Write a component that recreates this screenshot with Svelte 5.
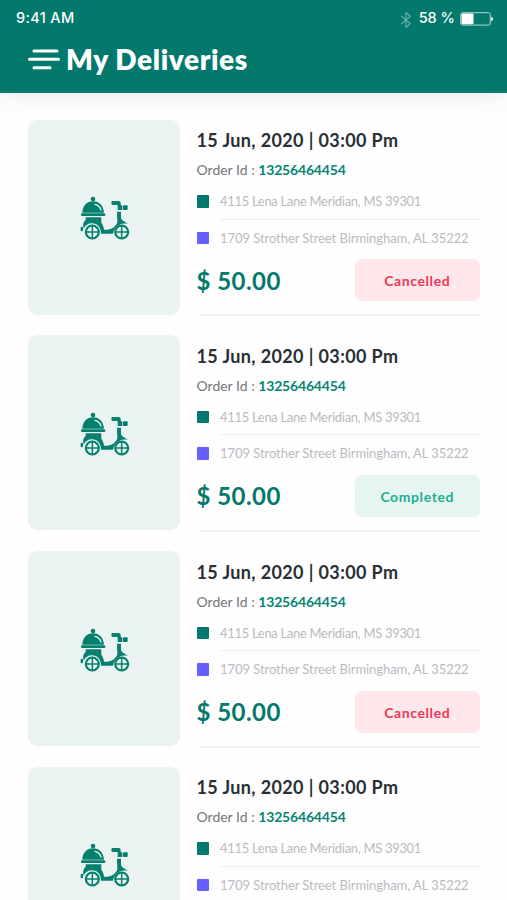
<script lang="ts">
  type Delivery = {
    date: string;
    orderId: string;
    pickup: string;
    dropoff: string;
    price: string;
    status: 'Cancelled' | 'Completed';
  };

  const base = {
    date: '15 Jun, 2020 | 03:00 Pm',
    orderId: '13256464454',
    pickup: '4115 Lena Lane Meridian, MS 39301',
    dropoff: '1709 Strother Street Birmingham, AL 35222',
    price: '$ 50.00'
  };

  const deliveries: Delivery[] = [
    { ...base, status: 'Cancelled' },
    { ...base, status: 'Completed' },
    { ...base, status: 'Cancelled' },
    { ...base, status: 'Completed' }
  ];
</script>

<div class="screen">
  <header>
    <div class="status-bar">
      <span class="time">9:41 AM</span>
      <svg class="bluetooth" viewBox="0 0 12 18" width="12" height="18" aria-hidden="true">
        <path d="M1.2 5 L10.3 12.6 L6 16.5 V1.5 L10.3 5.2 L1.2 13" />
      </svg>
      <span class="percent">58 %</span>
      <svg class="battery" viewBox="0 0 34 14" width="34" height="14" aria-hidden="true">
        <rect x="0.7" y="0.7" width="29.6" height="12.4" rx="2" fill="none" stroke="#b5d9d5" stroke-width="1" />
        <rect x="1.5" y="1.5" width="12" height="10.8" rx="0.8" fill="#fff" />
        <path d="M31.3 4.7 Q33.2 5.4 33.2 7 T31.3 9.3 Z" fill="#fff" />
      </svg>
    </div>
    <div class="title-bar">
      <svg class="menu" viewBox="0 0 32 21" width="32" height="21" aria-label="Menu">
        <path d="M6 2 H29 M1.5 10.3 H30.5 M6 18.7 H22" />
      </svg>
      <h1>My Deliveries</h1>
    </div>
  </header>

  <main>
    {#each deliveries as delivery}
      <article class="delivery">
        <div class="thumb">
          <svg viewBox="30 32 150 132" width="50" height="44" aria-hidden="true">
            <g fill="#05806f">
              <circle cx="69" cy="41" r="7" />
              <path d="M37 82 C38 61 50 48 69 48 C88 48 100 61 102 82 Z" />
              <rect x="33" y="84" width="73" height="8" rx="3" />
              <path d="M47 96 H94 V112 C99 119 102 127 102 133 H112 C126 132 135 124 142 112 L141 79 H153 V99 C156 107 166 110 174 116 C151 110 133 124 129 145 H93 C93 126 82 114 66 114 C54 114 46 120 41 130 C38 119 40 108 47 104 Z" />
              <path d="M127 47 H146 Q152 47 152 53 V60 H157 V74 H143 V59 H127 Q124 58 124 53 Q124 47 127 47 Z" />
              <rect x="159" y="60" width="14" height="14" rx="3" />
              <rect x="32" y="124" width="7" height="14" rx="3" />
            </g>
            <path d="M75 57 C84 59 90 65 93 74" fill="none" stroke="#eaf3f2" stroke-width="4" stroke-linecap="round" />
            <g fill="#eaf3f2" stroke="#05806f" stroke-width="6.5">
              <circle cx="67" cy="140" r="19.5" />
              <circle cx="155" cy="140" r="19.5" />
            </g>
            <g fill="none" stroke="#05806f" stroke-width="4.5">
              <path d="M67 121 V159 M48 140 H86" />
              <path d="M155 121 V159 M136 140 H174" />
            </g>
          </svg>
        </div>
        <div class="details">
          <h2>{delivery.date}</h2>
          <p class="order"><span class="order-label">Order Id :</span> <strong>{delivery.orderId}</strong></p>
          <div class="stop">
            <span class="dot pickup"></span>
            <span class="address from">{delivery.pickup}</span>
          </div>
          <div class="stop">
            <span class="dot dropoff"></span>
            <span class="address to">{delivery.dropoff}</span>
          </div>
          <div class="summary">
            <span class="price">{delivery.price}</span>
            <span class="badge" class:completed={delivery.status === 'Completed'}>{delivery.status}</span>
          </div>
          <hr />
        </div>
      </article>
    {/each}
  </main>
</div>

<style>
  :global(body) {
    background: #fefefe;
  }

  .screen {
    width: 507px;
    height: 900px;
    overflow: hidden;
    background: #fefefe;
    font-family: Lato, 'Open Sans', sans-serif;
  }

  header {
    box-sizing: border-box;
    height: 92.5px;
    background: #03786c;
    color: #fff;
    box-shadow: 0 4px 24px rgba(0, 0, 0, 0.07);
  }

  .status-bar {
    display: flex;
    align-items: center;
    height: 35px;
    padding: 0 13px 0 16px;
    font: 500 14.5px/35px Inter, sans-serif;
  }

  .time {
    margin-right: auto;
    letter-spacing: 0.35px;
  }

  .bluetooth {
    margin: 4px 7px 0 0;
    fill: none;
    stroke: #69aea6;
    stroke-width: 1.2;
  }

  .percent {
    margin-right: 5px;
  }

  .battery {
    margin-top: 3px;
  }

  .title-bar {
    display: flex;
    align-items: center;
    gap: 6px;
    height: 48px;
    padding-left: 28px;
  }

  .menu {
    margin-top: 1px;
    fill: none;
    stroke: #fff;
    stroke-width: 3;
    stroke-linecap: round;
  }

  h1 {
    margin: 0;
    font-size: 28px;
    font-weight: 800;
    line-height: 48px;
    letter-spacing: 0.62px;
    white-space: nowrap;
  }

  main {
    display: flex;
    flex-direction: column;
    gap: 20.8px;
    padding: 27px 27px 0 28px;
  }

  .delivery {
    display: flex;
    gap: 16.5px;
    height: 195px;
  }

  .thumb {
    display: flex;
    flex: 0 0 152px;
    align-items: center;
    justify-content: center;
    border-radius: 9px;
    background: #eaf3f2;
  }

  .thumb svg {
    margin: 2px 0 0 1.5px;
  }

  .details {
    flex: 1;
    min-width: 0;
    white-space: nowrap;
  }

  h2 {
    margin: 8.5px 0 0;
    color: #292f33;
    font-size: 18px;
    font-weight: 700;
    line-height: 24px;
    letter-spacing: 0.38px;
  }

  .order {
    margin: 8px 0 0;
    color: #73777a;
    font-size: 14px;
    line-height: 20px;
  }

  .order strong {
    color: #078573;
    font-weight: 700;
    letter-spacing: -0.18px;
  }

  .stop {
    display: flex;
    align-items: center;
    gap: 11px;
    height: 36.5px;
  }

  .stop:nth-of-type(1) {
    margin-top: 3px;
  }

  .dot {
    width: 12.5px;
    height: 12.5px;
    border-radius: 1px;
  }

  .pickup {
    background: #03786c;
  }

  .dropoff {
    background: #665fff;
  }

  .address {
    flex: 1;
    height: 36.5px;
    box-sizing: border-box;
    color: #b9bcbe;
    font-size: 13px;
    line-height: 36px;
    letter-spacing: -0.06px;
  }

  .address.from {
    border-bottom: 1.5px solid #eeeff0;
    letter-spacing: -0.31px;
  }

  .summary {
    display: flex;
    align-items: center;
    justify-content: space-between;
    height: 42px;
    margin-top: 3px;
  }

  .price {
    color: #03786c;
    font-size: 24px;
    font-weight: 700;
    letter-spacing: 0.45px;
  }

  .badge {
    width: 125.5px;
    height: 42px;
    border-radius: 7px;
    background: #ffe8eb;
    color: #ef3458;
    font-size: 14px;
    font-weight: 700;
    line-height: 43px;
    letter-spacing: 0.6px;
    text-align: center;
  }

  .badge.completed {
    background: #e5f5f2;
    color: #1fad91;
  }

  hr {
    height: 2px;
    margin: 13px 0 0 3px;
    border: none;
    background: #f1f2f2;
  }
</style>
